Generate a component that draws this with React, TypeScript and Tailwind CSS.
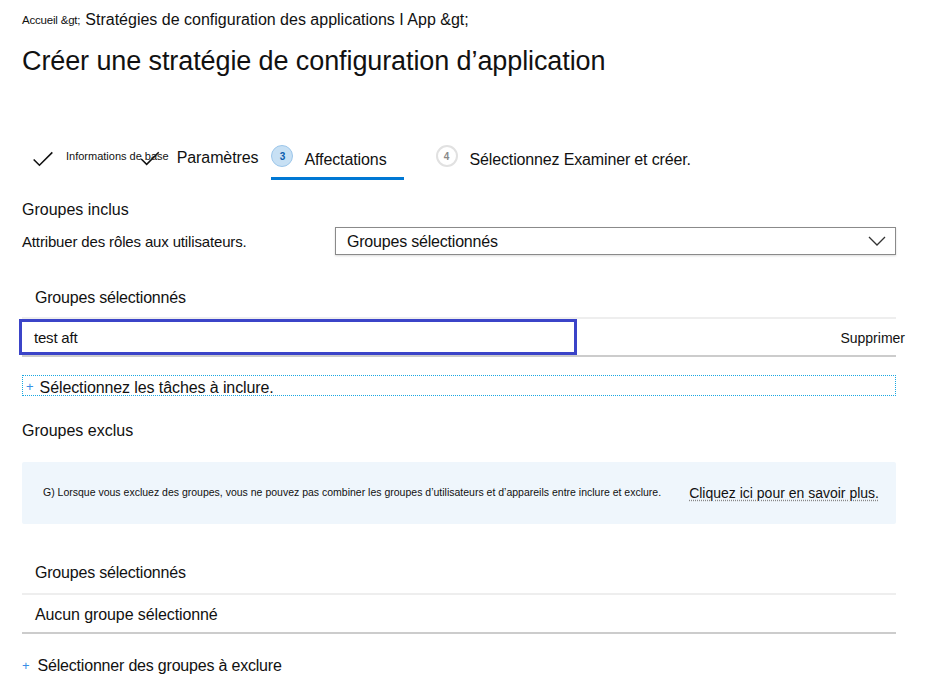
import React from 'react';

const font = { fontFamily: "'Liberation Sans', Arial, sans-serif" };

const Check: React.FC<{ className?: string }> = ({ className }) => (
  <svg viewBox="0 0 24 18" className={className} fill="none" stroke="#111" strokeWidth="1.8">
    <path d="M1.5 9.5 L8 16 L22.5 1.5" />
  </svg>
);

export default function App() {
  return (
    <div className="w-[935px] h-[680px] bg-white text-[#111] overflow-hidden" style={font}>
      {/* breadcrumb */}
      <div className="flex items-end pl-[22px] pt-[10px] h-[30px]">
        <span className="text-[11.5px] tracking-[-0.2px] mr-[5px] leading-none pb-[4px]">Accueil &amp;gt;</span>
        <span className="text-[16px] leading-none pb-[2px]">
          Stratégies de configuration des applications I App &amp;gt;
        </span>
      </div>

      <h1 className="pl-[22px] mt-[14px] text-[27px] tracking-[-0.1px] leading-[34px]">
        Créer une stratégie de configuration d’application
      </h1>

      {/* steps */}
      <div className="flex items-start pl-[32px] mt-[62px] h-[48px]">
        <div className="flex items-center mt-[11px]">
          <Check className="w-[22px] h-[16px]" />
        </div>
        <span className="ml-[12px] mt-[8px] text-[11px]">Informations de base</span>
        <div className="relative">
          <Check className="absolute left-[-29px] top-[11px] w-[20px] h-[15px]" />
        </div>
        <span className="ml-[8px] mt-[6px] text-[16px] tracking-[-0.1px]">Paramètres</span>
        <div className="ml-[13px] flex flex-col">
          <div className="flex items-center h-[32px] pr-[17px]">
            <span className="w-[22px] h-[22px] rounded-full bg-[#c7e0f4] border border-[#9cc6ea] flex items-center justify-center text-[10px] font-bold text-[#0b5cad]">
              3
            </span>
            <span className="ml-[11px] mt-[7px] text-[16px] tracking-[-0.1px]">Affectations</span>
          </div>
          <div className="h-[3px] bg-[#0078d4] mt-[5px]" />
        </div>
        <div className="ml-[32px] flex items-center h-[32px]">
          <span className="w-[22px] h-[22px] rounded-full border-2 border-[#e1e1e1] flex items-center justify-center text-[10px] font-bold text-[#8a8a8a]">
            4
          </span>
          <span className="ml-[12px] mt-[7px] text-[16px] tracking-[-0.15px]">Sélectionnez Examiner et créer.</span>
        </div>
      </div>

      <div className="px-[22px] w-[918px]">
        <div className="mt-[10px] text-[16px] leading-[24px]">Groupes inclus</div>

        <div className="flex items-center mt-[5px]">
          <div className="w-[313px] text-[15px] tracking-[-0.15px] pt-[3px]">Attribuer des rôles aux utilisateurs.</div>
          <div className="flex-1 h-[28px] border border-[#8a8a8a] shadow-[0_1px_2px_rgba(0,0,0,0.15)] flex items-center justify-between pl-[11px] pr-[9px]">
            <span className="text-[16px] tracking-[-0.2px] pt-[2px]">Groupes sélectionnés</span>
            <svg viewBox="0 0 18 10" className="w-[18px] h-[10px]" fill="none" stroke="#333" strokeWidth="1.3">
              <path d="M1 1 L9 9 L17 1" />
            </svg>
          </div>
        </div>

        <div className="mt-[32px] pl-[13px] text-[16px] tracking-[-0.2px] leading-[22px]">Groupes sélectionnés</div>

        <div className="mt-[8px] border-t-2 border-[#eeeeee] border-b-2 border-b-[#cccccc] h-[40px] flex items-center relative">
          <div className="absolute left-[-3px] top-0 w-[558px] h-[36px] border-[3px] border-[#3b44c8]" />
          <span className="pl-[12px] pt-[3px] text-[15px] tracking-[-0.2px]">test aft</span>
          <span className="ml-auto mr-[-9px] pt-[3px] text-[14px]">Supprimer</span>
        </div>

        <div className="mt-[18px] h-[21px] border border-dotted border-[#1aa7e0] flex items-center">
          <span className="text-[#3a8ee6] text-[13px] ml-[3px] pt-[2px]">+</span>
          <span className="ml-[6px] pt-[4px] text-[16px] tracking-[-0.1px]">Sélectionnez les tâches à inclure.</span>
        </div>

        <div className="mt-[24px] text-[16px] leading-[22px]">Groupes exclus</div>

        <div className="mt-[20px] h-[62px] bg-[#eff6fc] rounded-[2px] flex items-center pl-[21px] pr-[17px]">
          <span className="text-[10.5px]">
            G) Lorsque vous excluez des groupes, vous ne pouvez pas combiner les groupes d’utilisateurs et d’appareils entre inclure et exclure.
          </span>
          <span className="ml-auto text-[14px] underline decoration-dotted decoration-[#888] underline-offset-2">
            Cliquez ici pour en savoir plus.
          </span>
        </div>

        <div className="mt-[38px] pl-[13px] text-[16px] tracking-[-0.2px] leading-[22px]">Groupes sélectionnés</div>
        <div className="mt-[9px] border-t-2 border-[#eeeeee]" />
        <div className="pl-[13px] h-[37px] flex items-center text-[16px] tracking-[-0.1px] pt-[3px]">Aucun groupe sélectionné</div>
        <div className="border-t-2 border-[#cccccc]" />

        <div className="mt-[20px] flex items-center">
          <span className="text-[#3a8ee6] text-[13px]">+</span>
          <span className="ml-[8px] text-[16px] tracking-[-0.2px]">Sélectionner des groupes à exclure</span>
        </div>
      </div>
    </div>
  );
}
